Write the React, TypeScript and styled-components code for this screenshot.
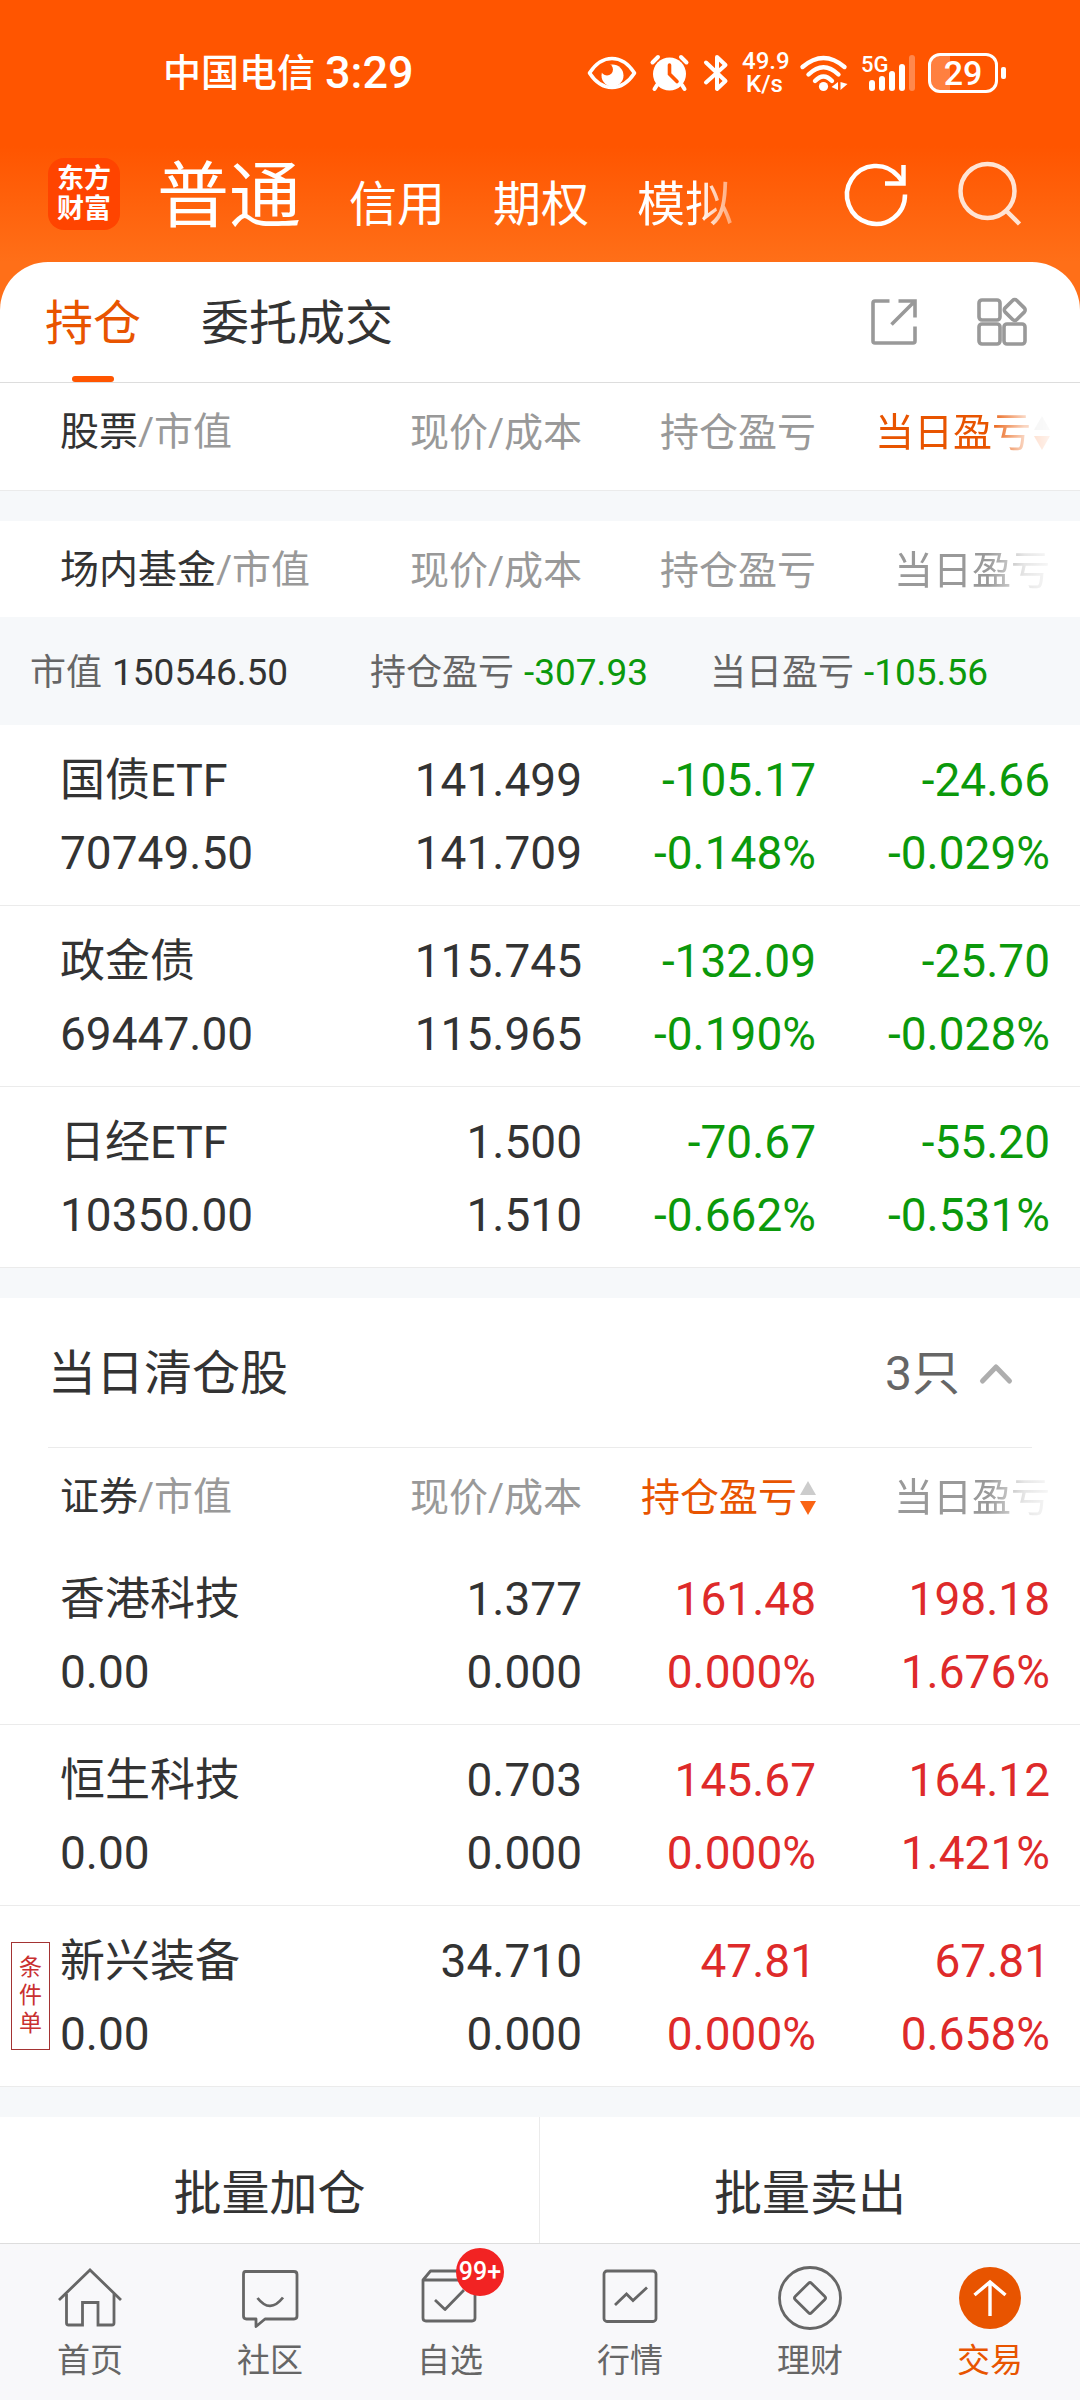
import React from "react";
import styled, { createGlobalStyle } from "styled-components";

const color = {
  brand: "#ff5500",
  accent: "#e85400",
  ink: "#333333",
  sub: "#666666",
  mute: "#999999",
  up: "#de2a2a",
  down: "#0b990b",
  band: "#f6f8fa",
  line: "#ebebeb",
};

type Tone = "ink" | "up" | "down";

const GlobalStyle = createGlobalStyle`
  * { box-sizing: border-box; }
  body { margin: 0; background: #ffffff; }
  body, button {
    font-family: Roboto, "Noto Sans CJK SC", "Noto Sans", sans-serif;
  }
  button {
    margin: 0;
    padding: 0;
    border: 0;
    background: none;
    color: inherit;
    font-size: inherit;
    line-height: inherit;
    cursor: pointer;
  }
  svg { display: block; overflow: visible; }
`;

const Screen = styled.div`
  display: flex;
  flex-direction: column;
  height: 100vh;
  color: ${color.ink};
  background: linear-gradient(to bottom, ${color.brand} 146px, #ff6f18 262px);
`;

const StatusBar = styled.div`
  display: flex;
  align-items: center;
  justify-content: space-between;
  flex: none;
  height: 146px;
  padding: 0 74px 0 163px;
  color: #ffffff;
`;

const Carrier = styled.div`
  display: flex;
  align-items: center;
  gap: 10px;
  font-size: 38px;
  font-weight: 500;
  line-height: 48px;
`;

const Clock = styled.span`
  font-size: 45px;
`;

const StatusIcons = styled.div`
  display: flex;
  align-items: center;
  gap: 13px;
`;

const Speed = styled.div`
  width: 45px;
  font-size: 24px;
  font-weight: 500;
  line-height: 23px;
  text-align: center;
`;

const Signal = styled.div`
  position: relative;
`;

const Generation = styled.span`
  position: absolute;
  top: -2px;
  left: 0;
  font-size: 22px;
  font-weight: 500;
  line-height: 26px;
`;

const Battery = styled.div`
  display: flex;
  align-items: center;
  gap: 3px;

  &::after {
    content: "";
    width: 5px;
    height: 12px;
    border-radius: 2px;
    background: #ffffff;
  }
`;

const BatteryBody = styled.div`
  width: 70px;
  height: 40px;
  border: 3px solid #ffffff;
  border-radius: 12px;
  background: linear-gradient(to right, rgba(255, 255, 255, 0.25) 30%, transparent 30%);
  font-size: 34px;
  font-weight: 500;
  line-height: 34px;
  text-align: center;
`;

const TitleBar = styled.header`
  display: flex;
  align-items: center;
  flex: none;
  height: 116px;
  padding: 0 58px 20px 48px;
  color: #ffffff;
`;

const Logo = styled.div`
  display: flex;
  flex-direction: column;
  justify-content: center;
  width: 72px;
  height: 72px;
  margin-right: 37px;
  border-radius: 16px;
  background: #ff4400;
  font-size: 27px;
  font-weight: 700;
  line-height: 30px;
  text-align: center;
`;

const Accounts = styled.nav`
  display: flex;
  align-items: baseline;
  flex: 1;
  gap: 48px;
  padding-top: 14px;
`;

const Account = styled.button<{ $active?: boolean; $fade?: boolean }>`
  font-size: ${(p) => (p.$active ? 72 : 48)}px;
  line-height: 96px;
  ${(p) => p.$fade && "mask-image: linear-gradient(to left, rgba(0, 0, 0, 0.4), #000 34px);"}
`;

const TitleActions = styled.div`
  display: flex;
  gap: 50px;
`;

const Sheet = styled.main`
  flex: 1;
  min-height: 0;
  overflow-y: auto;
  scrollbar-width: none;
  border-radius: 48px 48px 0 0;
  background: #ffffff;
`;

const TabBar = styled.div`
  display: flex;
  align-items: center;
  gap: 60px;
  height: 121px;
  padding: 0 53px 0 45px;
  border-bottom: 1px solid #dddddd;
`;

const Tab = styled.button<{ $active?: boolean }>`
  display: grid;
  grid-template-rows: 1fr 6px;
  align-items: center;
  justify-items: center;
  height: 120px;
  padding-top: 9px;
  color: ${(p) => (p.$active ? color.accent : color.ink)};
  font-size: 48px;
  line-height: 72px;

  &::after {
    content: "";
    width: 42px;
    height: 6px;
    border-radius: 3px;
    background: ${(p) => (p.$active ? color.brand : "transparent")};
  }
`;

const TabActions = styled.div`
  display: flex;
  align-items: center;
  gap: 60px;
  margin-left: auto;
  color: ${color.mute};
`;

const Section = styled.section<{ $tail?: number }>`
  padding-bottom: ${(p) => p.$tail ?? 0}px;
  border-bottom: 1px solid ${color.line};
`;

const Band = styled.div`
  height: 30px;
  background: ${color.band};
`;

const Table = styled.table`
  width: 100%;
  border-collapse: separate;
  border-spacing: 0;
  table-layout: fixed;
`;

const NumberCol = styled.col`
  width: 234px;
`;

const LastCol = styled.col`
  width: 264px;
`;

const Head = styled.th<{ $sorted?: boolean }>`
  height: 96px;
  padding: 1px 0 0;
  color: ${(p) => (p.$sorted ? color.accent : color.mute)};
  font-size: 39px;
  font-weight: 400;
  line-height: 60px;
  text-align: right;
  white-space: nowrap;

  &:first-child {
    padding-left: 60px;
    text-align: left;
  }
  &:last-child {
    padding-right: 30px;
  }
  &:last-child button {
    mask-image: linear-gradient(to left, rgba(0, 0, 0, 0.08), rgba(0, 0, 0, 0.25) 26px, #000 62px);
  }
`;

const HeadName = styled.span`
  color: ${color.ink};
`;

const SortButton = styled.button`
  display: inline-flex;
  align-items: center;
  gap: 3px;
  vertical-align: middle;
`;

const Row = styled.tr`
  & + & td {
    border-top: 1px solid ${color.line};
  }
`;

const Cell = styled.td<{ $tone?: Tone }>`
  position: relative;
  padding: 19px 0 15px;
  color: ${(p) => color[p.$tone ?? "ink"]};
  font-size: 46px;
  line-height: 73px;
  text-align: right;
  white-space: nowrap;

  &:first-child {
    padding-left: 60px;
    text-align: left;
  }
  &:last-child {
    padding-right: 30px;
  }
`;

const Line = styled.div<{ $name?: boolean }>`
  font-size: ${(p) => (p.$name ? 45 : 46)}px;
`;

const OrderTag = styled.span`
  position: absolute;
  top: 36px;
  left: 11px;
  width: 39px;
  padding: 11px 7px;
  border: 1px solid #a33333;
  color: #c93030;
  font-size: 23px;
  line-height: 28px;
  text-align: center;
  white-space: normal;
`;

const Summary = styled.div`
  display: grid;
  grid-template-columns: repeat(3, 1fr);
  align-items: center;
  height: 108px;
  padding: 3px 30px 0;
  background: ${color.band};
  font-size: 37px;
  line-height: 54px;
`;

const SummaryItem = styled.div<{ $tone?: Tone }>`
  display: flex;
  gap: 10px;
  color: ${(p) => color[p.$tone ?? "ink"]};
`;

const SummaryLabel = styled.span`
  color: ${color.sub};
  font-size: 36px;
`;

const Fold = styled.button`
  display: flex;
  align-items: center;
  width: calc(100% - 96px);
  height: 150px;
  margin: 0 48px;
  padding: 2px 19px 0 0;
  border-bottom: 1px solid ${color.line};
  font-size: 48px;
  line-height: 72px;
`;

const FoldCount = styled.span`
  margin: 0 19px 0 auto;
  color: ${color.sub};
`;

const Actions = styled.div`
  display: grid;
  grid-template-columns: 1fr 1fr;
`;

const Action = styled.button`
  height: 150px;
  padding-top: 3px;
  font-size: 48px;
  line-height: 72px;

  &:first-child {
    border-right: 1px solid ${color.line};
  }
`;

const BottomNav = styled.nav`
  display: grid;
  grid-template-columns: repeat(6, 1fr);
  flex: none;
  height: 157px;
  border-top: 1px solid #dddddd;
  background: #f8f8fa;
`;

const NavItem = styled.a<{ $active?: boolean }>`
  display: flex;
  flex-direction: column;
  align-items: center;
  gap: 7px;
  padding-top: 22px;
  color: ${(p) => (p.$active ? color.accent : color.sub)};
  font-size: 33px;
  line-height: 48px;
  text-decoration: none;
`;

const NavIcon = styled.span`
  position: relative;
`;

const Badge = styled.span`
  position: absolute;
  top: -18px;
  left: 38px;
  width: 48px;
  height: 48px;
  border-radius: 50%;
  background: #f22323;
  color: #ffffff;
  font-size: 25px;
  font-weight: 500;
  line-height: 48px;
  text-align: center;
`;

const EyeIcon = () => (
  <svg width="50" height="34" viewBox="0 0 50 34" fill="none">
    <path d="M2.5 17Q12 2.5 25 2.5T47.5 17Q38 31.5 25 31.5T2.5 17Z" stroke="#fff" strokeWidth="3.6" strokeLinejoin="round" />
    <circle cx="25.500" cy="19.500" r="11" fill="#fff" />
    <circle cx="20" cy="13.500" r="6" fill={color.brand} />
  </svg>
);

const AlarmIcon = () => (
  <svg width="40" height="38" viewBox="0 0 40 38" fill="none" strokeLinecap="round">
    <circle cx="19.500" cy="20" r="16.500" fill="#fff" />
    <path d="M2.500 8.500L8 3M31 3L36.500 8.500M7 31L4.500 35M32 31L34.500 35" stroke="#fff" strokeWidth="4" />
    <path d="M19.500 11V20L27 27.500" stroke={color.brand} strokeWidth="3.600" />
  </svg>
);

const BluetoothIcon = () => (
  <svg width="26" height="38" viewBox="0 0 26 38" fill="none" stroke="#fff" strokeWidth="4" strokeLinecap="round" strokeLinejoin="round">
    <path d="M3 8.500L22.500 27L14 35V3L22.500 11L3 28.500" />
  </svg>
);

const WifiIcon = () => (
  <svg width="48" height="38" viewBox="0 0 48 38" fill="none" stroke="#fff" strokeWidth="4.400" strokeLinecap="round">
    <path d="M2.500 13Q23.500 -5 44.500 13M8.500 20.500Q23.500 6 38.500 20.500M15 27Q23.500 18 32 27" />
    <circle cx="23.500" cy="32.500" r="4.600" fill="#fff" stroke="none" />
    <path d="M38 28V36L31.500 33ZM40.500 28L47.500 30L40.500 36Z" fill="#fff" stroke="none" />
  </svg>
);

const SignalIcon = () => (
  <svg width="54" height="38" viewBox="0 0 54 38" fill="#fff">
    <rect x="8" y="26" width="6" height="11" rx="3" />
    <rect x="18" y="22" width="6" height="15" rx="3" />
    <rect x="28" y="17" width="6" height="20" rx="3" />
    <rect x="38" y="10" width="6" height="27" rx="3" />
    <rect x="48" y="1" width="6" height="36" rx="3" opacity="0.3" />
  </svg>
);

const RefreshIcon = () => (
  <svg width="64" height="64" viewBox="0 0 64 64" fill="none" stroke="#fff" strokeWidth="4.500">
    <path d="M61 32.500A29 29 0 1 1 54 14L59 20.500" />
    <path d="M59.500 3V21.500H41" />
  </svg>
);

const SearchIcon = () => (
  <svg width="64" height="64" viewBox="0 0 64 64" fill="none" stroke="#ffe4d4" strokeWidth="4.500">
    <circle cx="29.500" cy="29" r="27" />
    <path d="M48 48.500L61.500 62" />
  </svg>
);

const ExportIcon = () => (
  <svg width="46" height="46" viewBox="0 0 46 46" fill="none" stroke="currentColor" strokeWidth="3.600">
    <path d="M18.500 2H4Q2 2 2 4V42Q2 44 4 44H42Q44 44 44 42V27.500" />
    <path d="M27.500 2H44V18.500M44 2L20.500 25.500" />
  </svg>
);

const WidgetsIcon = () => (
  <svg width="50" height="48" viewBox="0 0 50 48" fill="none" stroke="currentColor" strokeWidth="3.600">
    <rect x="2" y="2" width="21" height="20" rx="3" />
    <rect x="2" y="26" width="21" height="20" rx="3" />
    <rect x="27" y="26" width="21" height="20" rx="3" />
    <rect x="29.500" y="3.800" width="16.500" height="16.500" rx="3" transform="rotate(45 37.800 12)" />
  </svg>
);

const SortIcon = () => (
  <svg width="16" height="34" viewBox="0 0 16 34">
    <path d="M8 0L16 14H0Z" fill="#cccccc" />
    <path d="M0 20H16L8 34Z" fill="#fa6414" />
  </svg>
);

const ChevronIcon = () => (
  <svg width="34" height="22" viewBox="0 0 34 22" fill="none" stroke="#aeaeae" strokeWidth="5" strokeLinecap="round" strokeLinejoin="round">
    <path d="M3.500 18L17 4L30.500 18" />
  </svg>
);

const navSvg = {
  width: 64,
  height: 64,
  viewBox: "0 0 64 64",
  fill: "none",
  stroke: "currentColor",
  strokeWidth: 2.8,
};

const HomeIcon = () => (
  <svg {...navSvg}>
    <path d="M1 34L32 4L63 34" />
    <path d="M8.500 28V57Q8.500 59 10.500 59H24.500V36.500H40V59H54Q56 59 56 57V28" />
  </svg>
);

const CommunityIcon = () => (
  <svg {...navSvg} strokeLinejoin="round">
    <path d="M7.500 5.500H56Q59 5.500 59 8.500V50Q59 53 56 53H27L18 60.500V53H8.500Q5.500 53 5.500 50V8.500Q5.500 5.500 7.500 5.500Z" />
    <path d="M19.500 32Q32 48 45 31.500" />
  </svg>
);

const WatchIcon = () => (
  <svg {...navSvg} strokeLinejoin="round">
    <path d="M5 14L12.500 5H50L57 14V52Q57 55 54 55H8Q5 55 5 52ZM5 14H57" />
    <path d="M17 34L27 43.500L46 24" />
  </svg>
);

const MarketIcon = () => (
  <svg {...navSvg}>
    <rect x="6" y="5" width="52" height="50.500" rx="3" />
    <path d="M17 39L28.500 28L35 34.500L49 21.500" />
  </svg>
);

const WealthIcon = () => (
  <svg {...navSvg}>
    <circle cx="32" cy="32" r="30.500" />
    <rect x="20.500" y="20.500" width="23" height="23" rx="2" transform="rotate(45 32 32)" />
  </svg>
);

const TradeIcon = () => (
  <svg {...navSvg}>
    <circle cx="32" cy="32" r="31" fill={color.accent} stroke="none" />
    <path d="M32 50V17M16.500 29L32 16L47.500 29" stroke="#fff" strokeWidth="3.400" />
  </svg>
);

type Pair = [string, string];
interface Holding {
  name: Pair;
  price: Pair;
  total: Pair;
  today: Pair;
  tag?: string;
}

const funds: Holding[] = [
  { name: ["国债ETF", "70749.50"], price: ["141.499", "141.709"], total: ["-105.17", "-0.148%"], today: ["-24.66", "-0.029%"] },
  { name: ["政金债", "69447.00"], price: ["115.745", "115.965"], total: ["-132.09", "-0.190%"], today: ["-25.70", "-0.028%"] },
  { name: ["日经ETF", "10350.00"], price: ["1.500", "1.510"], total: ["-70.67", "-0.662%"], today: ["-55.20", "-0.531%"] },
];

const cleared: Holding[] = [
  { name: ["香港科技", "0.00"], price: ["1.377", "0.000"], total: ["161.48", "0.000%"], today: ["198.18", "1.676%"] },
  { name: ["恒生科技", "0.00"], price: ["0.703", "0.000"], total: ["145.67", "0.000%"], today: ["164.12", "1.421%"] },
  { name: ["新兴装备", "0.00"], price: ["34.710", "0.000"], total: ["47.81", "0.000%"], today: ["67.81", "0.658%"], tag: "条件单" },
];

const Columns = () => (
  <colgroup>
    <col />
    <NumberCol />
    <NumberCol />
    <LastCol />
  </colgroup>
);

const HeadRow = ({ name, sorted }: { name: string; sorted?: string }) => (
  <thead>
    <tr>
      <Head scope="col">
        <HeadName>{name}</HeadName>/市值
      </Head>
      {["现价/成本", "持仓盈亏", "当日盈亏"].map((label) => (
        <Head key={label} scope="col" $sorted={label === sorted}>
          <SortButton type="button">
            {label}
            {label === sorted && <SortIcon />}
          </SortButton>
        </Head>
      ))}
    </tr>
  </thead>
);

const PairCell = ({ pair, tone }: { pair: Pair; tone?: Tone }) => (
  <Cell $tone={tone}>
    <Line>{pair[0]}</Line>
    <Line>{pair[1]}</Line>
  </Cell>
);

const HoldingRows = ({ items, tone }: { items: Holding[]; tone: Tone }) => (
  <tbody>
    {items.map((item) => (
      <Row key={item.name[0]}>
        <Cell>
          {item.tag && <OrderTag>{item.tag}</OrderTag>}
          <Line $name>{item.name[0]}</Line>
          <Line>{item.name[1]}</Line>
        </Cell>
        <PairCell pair={item.price} />
        <PairCell pair={item.total} tone={tone} />
        <PairCell pair={item.today} tone={tone} />
      </Row>
    ))}
  </tbody>
);

const navItems = [
  { label: "首页", Icon: HomeIcon },
  { label: "社区", Icon: CommunityIcon },
  { label: "自选", Icon: WatchIcon, badge: "99+" },
  { label: "行情", Icon: MarketIcon },
  { label: "理财", Icon: WealthIcon },
  { label: "交易", Icon: TradeIcon, active: true },
];

export default function App() {
  return (
    <Screen>
      <GlobalStyle />
      <StatusBar>
        <Carrier>
          <span>中国电信</span>
          <Clock>3:29</Clock>
        </Carrier>
        <StatusIcons>
          <EyeIcon />
          <AlarmIcon />
          <BluetoothIcon />
          <Speed>49.9 K/s</Speed>
          <WifiIcon />
          <Signal>
            <SignalIcon />
            <Generation>5G</Generation>
          </Signal>
          <Battery>
            <BatteryBody>29</BatteryBody>
          </Battery>
        </StatusIcons>
      </StatusBar>

      <TitleBar>
        <Logo>
          <span>东方</span>
          <span>财富</span>
        </Logo>
        <Accounts>
          <Account type="button" $active>普通</Account>
          <Account type="button">信用</Account>
          <Account type="button">期权</Account>
          <Account type="button" $fade>模拟</Account>
        </Accounts>
        <TitleActions>
          <button type="button" aria-label="刷新"><RefreshIcon /></button>
          <button type="button" aria-label="搜索"><SearchIcon /></button>
        </TitleActions>
      </TitleBar>

      <Sheet>
        <TabBar>
          <Tab type="button" $active>持仓</Tab>
          <Tab type="button">委托成交</Tab>
          <TabActions>
            <button type="button" aria-label="分享"><ExportIcon /></button>
            <button type="button" aria-label="更多功能"><WidgetsIcon /></button>
          </TabActions>
        </TabBar>

        <Section $tail={11}>
          <Table>
            <Columns />
            <HeadRow name="股票" sorted="当日盈亏" />
          </Table>
        </Section>
        <Band />

        <Section>
          <Table>
            <Columns />
            <HeadRow name="场内基金" />
          </Table>
          <Summary>
            <SummaryItem>
              <SummaryLabel>市值</SummaryLabel>150546.50
            </SummaryItem>
            <SummaryItem $tone="down">
              <SummaryLabel>持仓盈亏</SummaryLabel>-307.93
            </SummaryItem>
            <SummaryItem $tone="down">
              <SummaryLabel>当日盈亏</SummaryLabel>-105.56
            </SummaryItem>
          </Summary>
          <Table>
            <Columns />
            <HoldingRows items={funds} tone="down" />
          </Table>
        </Section>
        <Band />

        <Section>
          <Fold type="button" aria-expanded="true">
            当日清仓股
            <FoldCount>3只</FoldCount>
            <ChevronIcon />
          </Fold>
          <Table>
            <Columns />
            <HeadRow name="证券" sorted="持仓盈亏" />
            <HoldingRows items={cleared} tone="up" />
          </Table>
        </Section>
        <Band />

        <Actions>
          <Action type="button">批量加仓</Action>
          <Action type="button">批量卖出</Action>
        </Actions>
      </Sheet>

      <BottomNav>
        {navItems.map(({ label, Icon, badge, active }) => (
          <NavItem key={label} href="#" $active={active}>
            <NavIcon>
              <Icon />
              {badge && <Badge>{badge}</Badge>}
            </NavIcon>
            {label}
          </NavItem>
        ))}
      </BottomNav>
    </Screen>
  );
}
